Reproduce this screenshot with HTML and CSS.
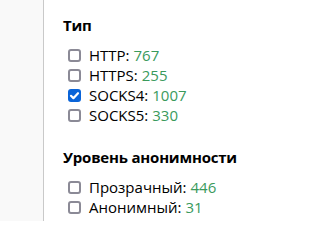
FILE: index.html
```html
<!DOCTYPE html>
<html lang="ru">
<head>
<meta charset="utf-8">
<link rel="stylesheet" href="styles.css">
</head>
<body>
<div class="page">
  <aside class="side"></aside>
  <main class="filters">
    <section class="group">
      <h3 class="title">Тип</h3>
      <ul class="list">
        <li class="row"><span class="box"></span><span class="label">HTTP:</span><span class="count">767</span></li>
        <li class="row"><span class="box"></span><span class="label">HTTPS:</span><span class="count">255</span></li>
        <li class="row"><span class="box checked"><svg viewBox="0 0 13 13" width="13" height="13"><path d="M3 6.8 L5.4 9.2 L10 4.2" fill="none" stroke="#fff" stroke-width="2.2" stroke-linecap="round" stroke-linejoin="round"/></svg></span><span class="label">SOCKS4:</span><span class="count">1007</span></li>
        <li class="row"><span class="box"></span><span class="label">SOCKS5:</span><span class="count">330</span></li>
      </ul>
    </section>
    <section class="group">
      <h3 class="title">Уровень анонимности</h3>
      <ul class="list">
        <li class="row"><span class="box"></span><span class="label">Прозрачный:</span><span class="count">446</span></li>
        <li class="row"><span class="box"></span><span class="label">Анонимный:</span><span class="count">31</span></li>
        <li class="row"><span class="box"></span><span class="label">Элитный:</span><span class="count">1882</span></li>
      </ul>
    </section>
  </main>
</div>
</body>
</html>
```
FILE: styles.css
```css
html, body {
  margin: 0;
  padding: 0;
  background: #fff;
}
body {
  font-family: "Open Sans", "Noto Sans", sans-serif;
  color: #000;
  overflow: hidden;
}
.page {
  display: flex;
  height: 221px;
}
.side {
  width: 43px;
  flex: none;
  background: #f9f9f9;
  border-right: 1px solid #c9c9c9;
}
.filters {
  padding: 15px 0 0 19px;
}
.group {
  margin-bottom: 22px;
}
.title {
  margin: 0 0 10px 0;
  font-size: 15px;
  line-height: 20px;
  font-weight: 700;
  letter-spacing: -0.2px;
  color: #000;
}
.list {
  list-style: none;
  margin: 0;
  padding: 0 0 0 5px;
}
.row {
  display: flex;
  align-items: center;
  height: 20px;
  font-size: 15px;
  line-height: 20px;
  white-space: nowrap;
}
.box {
  width: 13px;
  height: 13px;
  box-sizing: border-box;
  border: 2px solid #8b8a96;
  border-radius: 3px;
  margin-right: 8px;
  flex: none;
  display: flex;
}
.box.checked {
  border: none;
  background: #0a64d8;
}
.box svg {
  display: block;
}
.count {
  color: #3a9a5c;
  margin-left: 4px;
}
```
